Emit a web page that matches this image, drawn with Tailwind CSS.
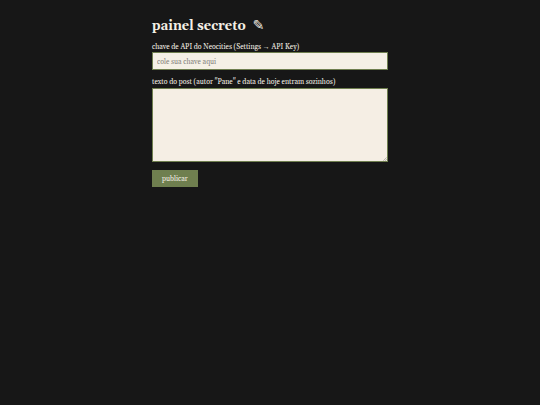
<!DOCTYPE html>
<html lang="pt-BR">
  <head>
    <meta charset="UTF-8" />
    <meta name="viewport" content="width=device-width, initial-scale=1.0" />
    <title>painel secreto</title>
    <script src="https://cdn.jsdelivr.net/npm/@tailwindcss/browser@4"></script>
  </head>
  <body class="min-h-screen bg-[#171717] px-4 py-4 font-[Georgia,Gelasio,'Liberation_Serif','DejaVu_Sans',serif] text-[#f5f0e6]">
    <main class="mx-auto w-full max-w-[236px]">
      <h1 class="mb-[6px] flex items-baseline gap-[7px] text-[13px] leading-[20px] font-bold">painel secreto <span class="text-[14px]">✎</span></h1>

      <form id="postForm">
        <label for="apiKey" class="block text-[7px] leading-[10px]">chave de API do Neocities (Settings <span class="font-['Liberation_Serif',serif]">→</span> API Key)</label>
        <input
          type="password"
          id="apiKey"
          placeholder="cole sua chave aqui"
          class="mb-[7px] block h-[18px] w-full border border-[#6f7f4f] bg-[#f5f0e6] px-1 pt-[2px] text-[7px] text-[#171717] placeholder:text-[#85827c] focus:outline-none"
        />

        <label for="postText" class="mb-px block text-[7px] leading-[10px]">texto do post (autor "Pane" e data de hoje entram sozinhos)</label>
        <div class="relative mb-2">
          <textarea
            id="postText"
            class="block h-[74px] w-full resize-none border border-[#6f7f4f] bg-[#f5eee4] p-1 text-[7px] text-[#171717] focus:outline-none"
          ></textarea>
          <!-- resize grip -->
          <svg class="pointer-events-none absolute right-px bottom-px size-1" viewBox="0 0 4 4" fill="none" stroke="#8f8d86" stroke-width="0.6">
            <path d="M0.3 3.8 3.8 0.3M2.2 3.8 3.8 2.2" />
          </svg>
        </div>

        <button type="submit" class="block h-[17px] bg-[#6f7f4f] px-[10px] pt-[2px] text-[7px] leading-[9px] text-[#f5f0e6] hover:bg-[#7f8f5f]">publicar</button>
      </form>
    </main>
  </body>
</html>
